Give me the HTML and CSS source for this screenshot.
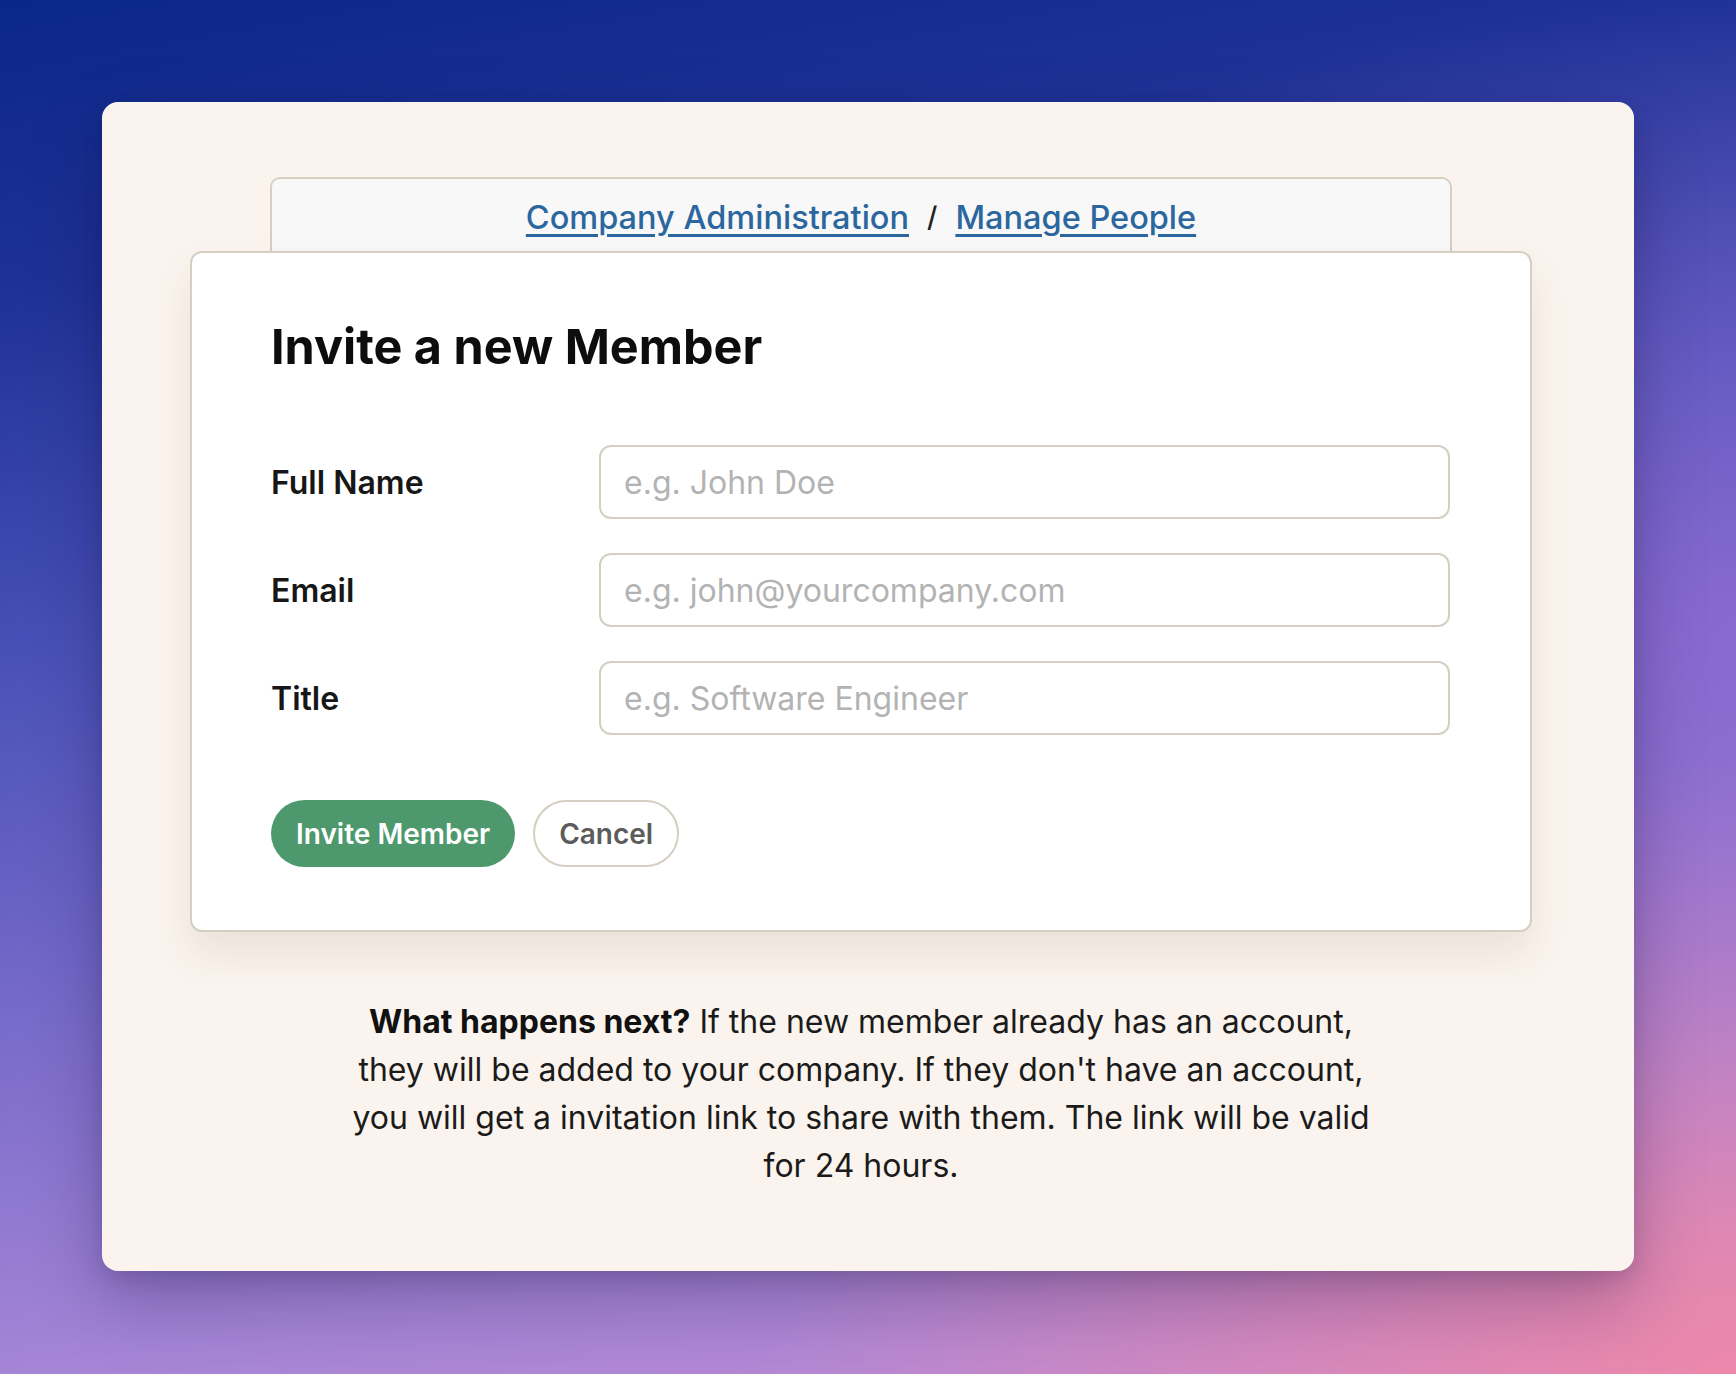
FILE: index.html
```html
<!DOCTYPE html>
<html lang="en">
<head>
<meta charset="utf-8">
<title>Invite a new Member</title>
<link rel="stylesheet" href="styles.css">
</head>
<body>
  <main class="sheet">
    <nav class="crumbs">
      <a href="#" class="crumb-link">Company Administration</a>
      <span class="crumb-sep">/</span>
      <a href="#" class="crumb-link">Manage People</a>
    </nav>
    <section class="panel">
      <h1 class="panel-title">Invite a new Member</h1>
      <form class="form">
        <label class="field-label" for="fullname">Full Name</label>
        <input class="field-input" id="fullname" type="text" placeholder="e.g. John Doe">
        <label class="field-label" for="email">Email</label>
        <input class="field-input" id="email" type="email" placeholder="e.g. john@yourcompany.com">
        <label class="field-label" for="title">Title</label>
        <input class="field-input" id="title" type="text" placeholder="e.g. Software Engineer">
      </form>
      <div class="actions">
        <button class="btn btn-primary" type="button">Invite Member</button>
        <button class="btn btn-secondary" type="button">Cancel</button>
      </div>
    </section>
    <p class="note"><strong>What happens next?</strong> If the new member already has an account, they will be added to your company. If they don't have an account, you will get a invitation link to share with them. The link will be valid for 24 hours.</p>
  </main>
</body>
</html>
```

FILE: styles.css
```css
* { box-sizing: border-box; }

html, body {
  margin: 0;
  padding: 0;
}

body {
  width: 1736px;
  height: 1374px;
  padding: 102px;
  font-family: Inter, "Noto Sans", sans-serif;
  color: #161616;
  background:
    radial-gradient(ellipse 60% 45% at 100% 45%, rgba(160, 110, 215, 0.55), rgba(160, 110, 215, 0) 100%),
    radial-gradient(ellipse 55% 45% at 100% 100%, rgba(240, 135, 165, 0.9), rgba(240, 135, 165, 0) 100%),
    linear-gradient(170deg, #0a2788 0%, #1f3296 18%, #4a52b8 40%, #7a6cca 62%, #a585d6 82%, #c58cd4 100%);
  overflow: hidden;
}

.sheet {
  width: 1532px;
  height: 1169px;
  background: #fbf4ee;
  border-radius: 16px;
  padding: 75px 14px 0 0;
  box-shadow: 0 30px 70px rgba(20, 10, 60, 0.28), 0 8px 20px rgba(20, 10, 60, 0.12);
  display: flex;
  flex-direction: column;
  align-items: center;
}

.crumbs {
  width: 1182px;
  height: 74px;
  background: #f8f8f8;
  border: 2px solid #d6cfc1;
  border-bottom: none;
  border-radius: 10px 10px 0 0;
  display: flex;
  align-items: center;
  justify-content: center;
  padding-top: 4px;
  font-size: 32.5px;
  font-weight: 500;
}

.crumb-link {
  color: #2b679e;
  text-decoration: underline;
  text-decoration-thickness: 3px;
  text-underline-offset: 5px;
}

.crumb-sep {
  color: #222;
  margin: 0 18px;
  font-size: 28px;
}

.panel {
  width: 1342px;
  height: 681px;
  background: #ffffff;
  border: 2px solid #d5cfc2;
  border-radius: 12px;
  padding: 65px 79px 0;
  box-shadow: 0 22px 40px rgba(90, 70, 40, 0.10);
}

.panel-title {
  margin: 0;
  font-size: 48.5px;
  line-height: 58px;
  font-weight: 700;
  color: #0d0d0d;
}

.form {
  margin-top: 69px;
  display: grid;
  grid-template-columns: 328px 851px;
  row-gap: 34px;
  align-items: center;
}

.field-label {
  font-size: 32px;
  font-weight: 600;
  color: #171717;
}

.field-input {
  height: 74px;
  border: 2px solid #d5cfc2;
  border-radius: 12px;
  padding: 0 23px;
  font-family: Inter, "Noto Sans", sans-serif;
  font-size: 32px;
  color: #222;
  background: #fff;
  outline: none;
}

.field-input::placeholder {
  color: #b3b3b3;
}

.actions {
  margin-top: 65px;
  display: flex;
  gap: 18px;
}

.btn {
  height: 67px;
  border-radius: 999px;
  font-family: Inter, "Noto Sans", sans-serif;
  font-size: 28px;
  font-weight: 600;
  cursor: pointer;
}

.btn-primary {
  background: #4d996d;
  color: #ffffff;
  border: none;
  padding: 0 25px;
}

.btn-secondary {
  background: #ffffff;
  color: #5c5c5c;
  border: 2px solid #d5cfc2;
  padding: 0 24px;
}

.note {
  width: 1040px;
  margin: 66px 0 0;
  text-align: center;
  font-size: 32px;
  line-height: 48px;
  color: #1b1b1b;
}

.note strong {
  font-weight: 700;
  color: #111;
}
```
